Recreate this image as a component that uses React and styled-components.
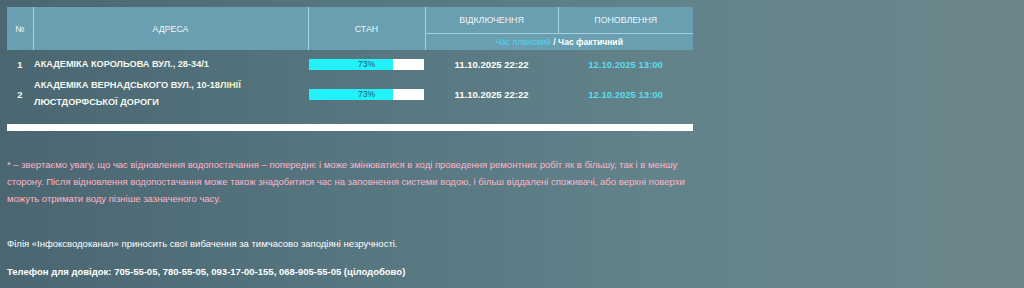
import React from 'react';
import styled, { createGlobalStyle } from 'styled-components';

const GlobalStyle = createGlobalStyle`
  html, body {
    margin: 0;
    padding: 0;
  }
  body {
    min-height: 288px;
    background: linear-gradient(to right, #4a6671 0%, #567680 35%, #62838a 65%, #6d868b 100%);
    font-family: "Liberation Sans", Arial, sans-serif;
    color: #ffffff;
  }
`;

const Page = styled.div`
  padding: 7px 7px 0 7px;
  width: 686px;
`;

const Table = styled.table`
  width: 686px;
  border-collapse: collapse;
  table-layout: fixed;
`;

const HeadCell = styled.th`
  background: #6a9fb1;
  color: #eef7fa;
  font-weight: normal;
  font-size: 8.8px;
  text-transform: uppercase;
  text-align: center;
  padding: 0;
  height: ${p => p.$h || 26}px;
  border-left: 1px solid #a6d0dc;
  border-bottom: ${p => (p.$split ? '1px solid #a6d0dc' : 'none')};
  &:first-child {
    border-left: none;
  }
`;

const SubHead = styled.th`
  background: #6a9fb1;
  font-size: 8.6px;
  font-weight: normal;
  height: 16px;
  padding: 0;
  text-align: center;
  border-left: 1px solid #a6d0dc;
`;

const Planned = styled.span`
  color: #52d2f2;
`;

const Actual = styled.span`
  color: #ffffff;
  font-weight: bold;
`;

const Cell = styled.td`
  font-size: ${p => p.$size || 9.5}px;
  font-weight: bold;
  line-height: 17px;
  padding: ${p => (p.$first ? '6px 1px 2px 1px' : '2px 1px')};
  text-align: ${p => p.$align || 'left'};
  vertical-align: middle;
  color: ${p => p.$color || '#f4f8f0'};
`;

const Highlight = styled.span`
  color: #eef3c4;
`;

const Bar = styled.div`
  position: relative;
  height: 11px;
  background: #ffffff;
`;

const BarFill = styled.div`
  height: 100%;
  background: #22f1f9;
`;

const BarLabel = styled.span`
  position: absolute;
  inset: 0;
  text-align: center;
  font-size: 8.5px;
  line-height: 11px;
  font-weight: normal;
  color: #2a566b;
`;

const Divider = styled.div`
  height: 7px;
  margin-top: 11px;
  background: #ffffff;
`;

const Note = styled.p`
  margin: 25px 0 0 0;
  font-size: 9.5px;
  line-height: 17px;
  color: #ffb5c8;
`;

const Line = styled.p`
  margin: ${p => p.$gap}px 0 0 0;
  font-size: 9.5px;
  line-height: 17px;
  color: #ffffff;
  font-weight: ${p => (p.$bold ? 'bold' : 'normal')};
`;

const rows = [
  { n: 1, addr: <>АКАДЕМІКА КОРОЛЬОВА ВУЛ., 28-34/1</>, pct: 73, off: '11.10.2025 22:22', on: '12.10.2025 13:00' },
  {
    n: 2,
    addr: <>АКАДЕМІКА ВЕРНАДСЬКОГО ВУЛ., 10-18<Highlight>ЛІНІЇ</Highlight><br />ЛЮСТДОРФСЬКОЇ ДОРОГИ</>,
    pct: 73,
    off: '11.10.2025 22:22',
    on: '12.10.2025 13:00',
  },
];

function Progress({ pct }) {
  return (
    <Bar>
      <BarFill style={{ width: `${pct}%` }} />
      <BarLabel>{pct}%</BarLabel>
    </Bar>
  );
}

export default function App() {
  return (
    <>
      <GlobalStyle />
      <Page>
        <Table>
          <colgroup>
            <col style={{ width: 26 }} />
            <col style={{ width: 275 }} />
            <col style={{ width: 117 }} />
            <col style={{ width: 133 }} />
            <col style={{ width: 135 }} />
          </colgroup>
          <thead>
            <tr>
              <HeadCell rowSpan={2} $h={43}>№</HeadCell>
              <HeadCell rowSpan={2} $h={43}>Адреса</HeadCell>
              <HeadCell rowSpan={2} $h={43}>Стан</HeadCell>
              <HeadCell $split>Відключення</HeadCell>
              <HeadCell $split>Поновлення</HeadCell>
            </tr>
            <tr>
              <SubHead colSpan={2}>
                <Planned>Час плановий</Planned> <Actual>/ Час фактичний</Actual>
              </SubHead>
            </tr>
          </thead>
          <tbody>
            {rows.map((r, i) => (
              <tr key={r.n}>
                <Cell $first={i === 0} $align="center">{r.n}</Cell>
                <Cell $first={i === 0} $size={9.2}>{r.addr}</Cell>
                <Cell $first={i === 0}><Progress pct={r.pct} /></Cell>
                <Cell $first={i === 0} $align="center" $color="#ffffff">{r.off}</Cell>
                <Cell $first={i === 0} $align="center" $color="#5cdcec">{r.on}</Cell>
              </tr>
            ))}
          </tbody>
        </Table>
        <Divider />
        <Note>
          * – звертаємо увагу, що час відновлення водопостачання – попереднє і може змінюватися в ході проведення ремонтних робіт як в більшу, так і в меншу сторону. Після відновлення водопостачання може також знадобитися час на заповнення системи водою, і більш віддалені споживачі, або верхні поверхи можуть отримати воду пізніше зазначеного часу.
        </Note>
        <Line $gap={28}>Філія «Інфоксводоканал» приносить свої вибачення за тимчасово заподіяні незручності.</Line>
        <Line $gap={11} $bold>Телефон для довідок: 705-55-05, 780-55-05, 093-17-00-155, 068-905-55-05 (цілодобово)</Line>
      </Page>
    </>
  );
}
